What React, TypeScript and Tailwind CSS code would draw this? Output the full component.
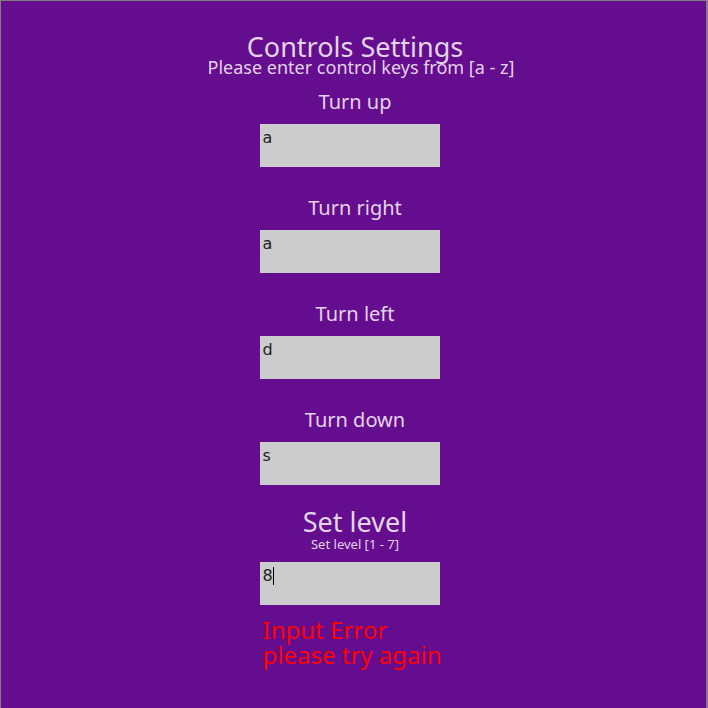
import type { ReactNode } from "react";

type Control = { label: string; value: string };

const controls: Control[] = [
  { label: "Turn up", value: "a" },
  { label: "Turn right", value: "a" },
  { label: "Turn left", value: "d" },
  { label: "Turn down", value: "s" },
];

function KeyBox({ children }: { children: ReactNode }) {
  return (
    <div className="mr-[11px] mt-[10px] flex h-[43px] w-[180px] items-start bg-[#cccccc] pl-[3px] pt-[4px] font-['DejaVu_Sans',sans-serif] text-[16px] leading-[20px] text-[#222222]">
      {children}
    </div>
  );
}

export default function App() {
  return (
    <div className="h-[708px] w-[708px] overflow-hidden border-l border-r-2 border-t border-[#7f7f7f] bg-[#650d8f] font-['Noto_Sans',sans-serif] text-[#e3d3ea]">
      <div className="flex flex-col items-center pl-[3px] pt-[35px]">
        <h1 className="text-[27px] leading-[21px]">Controls Settings</h1>
        <p className="ml-[12px] text-[18px] leading-[20px]">Please enter control keys from [a - z]</p>

        <div className="mt-[13px] flex flex-col items-center gap-[29px]">
          {controls.map((c, i) => (
            <div key={i} className="flex flex-col items-center">
              <label className="text-[20px] leading-[24px]">{c.label}</label>
              <KeyBox>{c.value}</KeyBox>
            </div>
          ))}
        </div>

        {/* level */}
        <div className="mt-[23px] flex flex-col items-center">
          <h2 className="text-[27px] leading-[28px]">Set level</h2>
          <p className="text-[13px] leading-[16px]">Set level [1 - 7]</p>
          <KeyBox>
            <span>8</span>
            <span className="mt-[1px] h-[18px] w-px bg-black" />
          </KeyBox>
        </div>

        <div className="mr-[11px] mt-[12px] w-[180px] pl-[3px] text-[24px] leading-[25px] text-[#ff0000]">
          <div>Input Error</div>
          <div className="whitespace-nowrap">please try again</div>
        </div>
      </div>
    </div>
  );
}
